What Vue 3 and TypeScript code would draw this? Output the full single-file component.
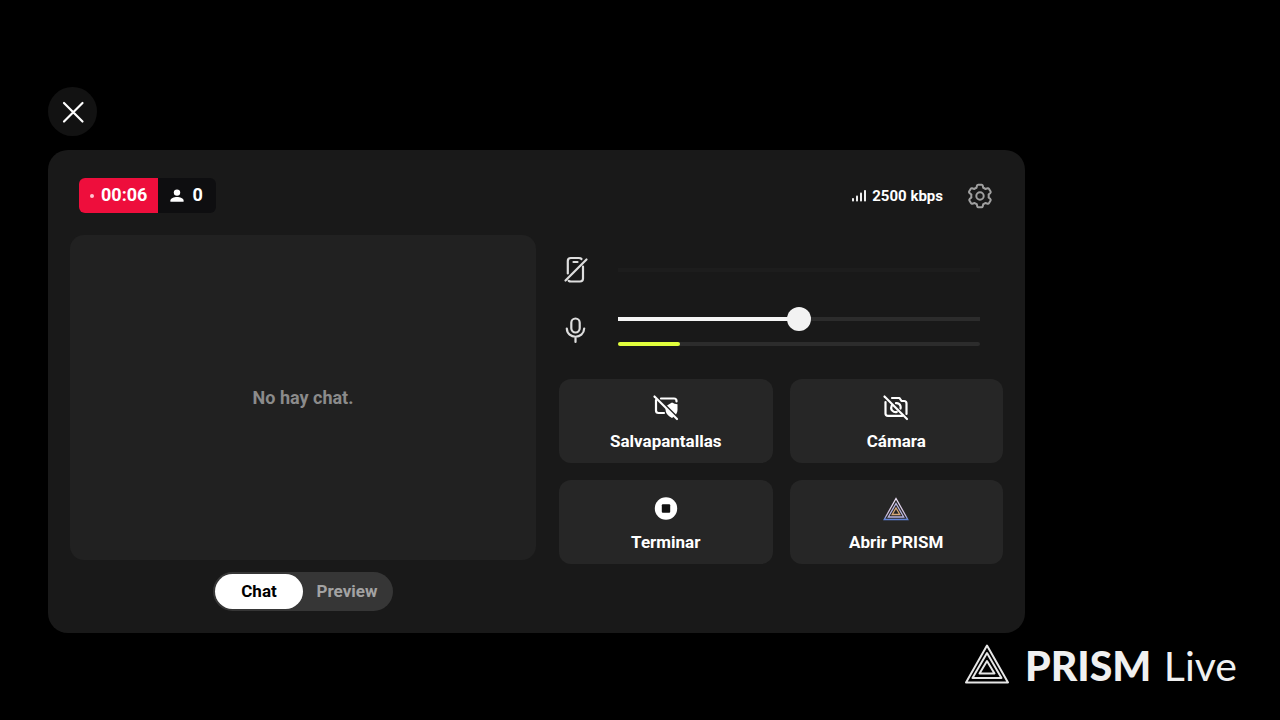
<script setup lang="ts">
import { ref } from 'vue'

type View = 'chat' | 'preview'

const view = ref<View>('chat')
const micVolume = ref(50)
const deviceVolume = ref(0)
const micLevel = ref(17)
const viewers = ref(0)
</script>

<template>
  <main class="screen">
    <button class="close" type="button" aria-label="Cerrar">
      <svg width="24" height="24" viewBox="0 0 24 24" fill="none" stroke="#fff" stroke-width="2.200" stroke-linecap="round">
        <path d="M3 3 21.500 21.500M21.500 3 3 21.500" />
      </svg>
    </button>

    <section class="panel">
      <header class="top">
        <div class="status">
          <span class="time"><i class="dot"></i>00:06</span>
          <span class="viewers">
            <svg width="14" height="14" viewBox="0 0 14 14" fill="#fff">
              <circle cx="7" cy="3.600" r="3.200" />
              <path d="M.4 12.800v-1.400C.4 9.300 4 8 7 8s6.600 1.300 6.600 3.400v1.400z" />
            </svg>
            {{ viewers }}
          </span>
        </div>
        <div class="network">
          <svg width="15" height="13" viewBox="0 0 15 13" fill="#eee">
            <rect x="0" y="9" width="2" height="3.500" rx=".8" />
            <rect x="4" y="6.500" width="2" height="6" rx=".8" />
            <rect x="8" y="3.500" width="2" height="9" rx=".8" />
            <rect x="12" y="1" width="2" height="11.500" rx=".8" />
          </svg>
          2500 kbps
        </div>
        <button class="settings" type="button" aria-label="Ajustes">
          <svg width="26" height="26" viewBox="0 0 26 26" fill="none" stroke="#a0a0a0" stroke-width="2" stroke-linejoin="round">
            <path d="M11.300 1.700h3.400q.8 0 1 .8l.5 2.300q1.200.4 2.200 1.200l2.300-.8q.8-.2 1.200.5l1.700 2.900q.4.700-.2 1.300l-1.800 1.600q.3 1.500 0 3l1.800 1.600q.6.600.2 1.300l-1.700 2.900q-.4.700-1.200.5l-2.300-.8q-1 .8-2.200 1.200l-.5 2.300q-.2.800-1 .8h-3.400q-.8 0-1-.8l-.5-2.300q-1.200-.4-2.200-1.200l-2.300.8q-.8.200-1.200-.5l-1.700-2.900q-.4-.7.200-1.300l1.800-1.600q-.3-1.500 0-3L2.300 9.900q-.6-.6-.2-1.300l1.700-2.900q.4-.7 1.200-.5l2.300.8q1-.8 2.200-1.200l.5-2.300q.2-.8 1.300-.8z" />
            <circle cx="13" cy="13" r="3.700" />
          </svg>
        </button>
      </header>

      <div class="body">
        <div class="left">
          <div class="chat">No hay chat.</div>
          <div class="toggle">
            <button type="button" :class="{ on: view === 'chat' }" :aria-pressed="view === 'chat'" @click="view = 'chat'">Chat</button>
            <button type="button" :class="{ on: view === 'preview' }" :aria-pressed="view === 'preview'" @click="view = 'preview'">Preview</button>
          </div>
        </div>

        <div class="right">
          <div class="audio device">
            <label for="device" aria-label="Audio del dispositivo">
              <svg width="26" height="28" viewBox="0 0 26 28" fill="none" stroke="#dedede" stroke-width="2.200" stroke-linecap="round">
                <path d="M4.800 17.500V5q0-3 3-3h8q2 0 2.700 1M20 10.500V22.500q0 3-3 3H8q-1.500 0-2.300-.7M10.500 6h4M2.500 24.500 23.500 3.500" />
              </svg>
            </label>
            <input id="device" v-model.number="deviceVolume" type="range" disabled />
          </div>
          <div class="audio mic">
            <label for="mic" aria-label="Micrófono">
              <svg width="26" height="28" viewBox="0 0 26 28" fill="none" stroke="#dedede" stroke-width="2.200" stroke-linecap="round">
                <rect x="8.300" y="2.500" width="8.400" height="14" rx="4.200" />
                <path d="M3.800 12.500c.5 11 16.900 11 17.400 0M12.500 21v5" />
              </svg>
            </label>
            <div class="levels">
              <input id="mic" v-model.number="micVolume" type="range" min="0" max="100" :style="{ '--value': micVolume + '%' }" />
              <div class="level"><span :style="{ width: micLevel + '%' }"></span></div>
            </div>
          </div>

          <div class="actions">
            <button type="button">
              <svg width="28" height="28" viewBox="0 0 28 28" fill="none" stroke="#fff" stroke-width="2.200" stroke-linecap="round">
                <path d="M9 5.500h13q2.500 0 2.500 2.500v.5M4 7v10.500q0 2.500 2.500 2.500H12" />
                <path d="M15 12.500 20 9.500q2.500 1.500 5.500 1.800V17q0 2.500-1.500 4.500zM13.500 15l8.500 8.500-2 1.500q-6.500-3-6.500-8.500z" fill="#fff" stroke="none" />
                <path d="M2.500 3.500 25 26" />
              </svg>
              Salvapantallas
            </button>
            <button type="button">
              <svg width="28" height="28" viewBox="0 0 28 28" fill="none" stroke="#fff" stroke-width="2.200" stroke-linecap="round" stroke-linejoin="round">
                <path d="M10 5h7.500l2 3H22Q24.500 8 24.500 10.500v10.500M3.500 9V20.500q0 2.300 2.500 2.300h14.500M14 10.200q3.500-.2 4.500 2.800.4 1.400 0 2.500M9.800 12.500q-1.800 4.500 2 6.200 1.400.6 3 .2" />
                <path d="M2.500 3.500 25 26" />
              </svg>
              Cámara
            </button>
            <button type="button">
              <svg width="28" height="28" viewBox="0 0 28 28">
                <circle cx="14" cy="14.500" r="11.200" fill="#fff" />
                <rect x="9.800" y="10.300" width="8.400" height="8.400" rx="1" fill="#111" />
              </svg>
              Terminar
            </button>
            <button type="button">
              <svg width="28" height="28" viewBox="0 0 28 28" fill="none" stroke-width="1.300">
                <defs>
                  <linearGradient id="prism" x1="0" y1="0" x2="0" y2="1">
                    <stop offset="0" stop-color="#efe4f8" />
                    <stop offset=".8" stop-color="#c9b9d8" />
                    <stop offset="1" stop-color="#5f83d8" />
                  </linearGradient>
                </defs>
                <path d="M14 4.500 25.800 25.500H2.200z" stroke="url(#prism)" />
                <path d="M14 9.500 21.700 23H6.300z" stroke="#b9b4de" />
                <path d="M14 14 17.800 20.500h-7.600z" stroke="#d7a878" />
              </svg>
              Abrir PRISM
            </button>
          </div>
        </div>
      </div>
    </section>

    <footer class="brand">
      <svg width="44" height="40" viewBox="0 0 44 40" fill="none" stroke="#e6e6e6" stroke-width="2" stroke-linejoin="round">
        <path d="M22 1.500 43 38.500H1z" />
        <path d="M22 9 36.500 34h-29z" />
        <path d="M22 17 29.500 29.500h-15z" />
      </svg>
      <span class="name"><b>PRISM</b> Live</span>
    </footer>
  </main>
</template>

<style>
body {
  margin: 0;
  background: #000;
}
</style>

<style scoped>
.screen {
  box-sizing: border-box;
  min-height: 100vh;
  padding: 87px 43px 30px 48px;
  background: #000;
  color: #fff;
  font: 700 17px/20px Roboto, "Liberation Sans", sans-serif;
}

button {
  padding: 0;
  border: 0;
  color: inherit;
  font: inherit;
  cursor: pointer;
}

svg {
  display: block;
  flex: none;
}

.close {
  display: grid;
  place-items: center;
  width: 49px;
  height: 49px;
  border-radius: 50%;
  background: #121212;
}

.panel {
  margin: 14px 212px 0 0;
  padding: 28px 22px 22px;
  border-radius: 20px;
  background: #191919;
}

.top {
  display: flex;
  align-items: center;
  height: 35px;
  padding: 0 10px 0 9px;
}

.status {
  display: flex;
  overflow: hidden;
  height: 35px;
  margin-right: auto;
  border-radius: 6px;
  background: #0e0e10;
  font-size: 18px;
  line-height: 34px;
}

.time,
.viewers {
  display: flex;
}

.time {
  gap: 7px;
  padding: 0 11px;
  background: #ee0e3c;
}

.dot {
  align-self: center;
  width: 4px;
  height: 4px;
  border-radius: 50%;
  background: #ffc4d0;
}

.viewers {
  gap: 8px;
  padding: 0 13px 0 12px;
}

.viewers svg {
  align-self: center;
}

.network {
  display: flex;
  align-items: center;
  gap: 5px;
  margin-right: 24px;
  font-size: 15px;
}

.settings {
  background: none;
}

.body {
  display: grid;
  grid-template-columns: 466fr 444fr;
  gap: 23px;
  margin-top: 22px;
}

.left {
  display: flex;
  flex-direction: column;
  align-items: center;
  gap: 12px;
}

.chat {
  display: grid;
  place-items: center;
  align-self: stretch;
  min-height: 325px;
  border-radius: 14px;
  background: #212121;
  color: #8b8b8b;
  font-size: 18px;
}

.toggle {
  display: flex;
  padding: 2px;
  border-radius: 20px;
  background: #363636;
}

.toggle button {
  width: 88px;
  height: 35px;
  padding-bottom: 2px;
  border-radius: 18px;
  background: none;
  color: #a3a3a3;
}

.toggle .on {
  background: #fff;
  color: #000;
}

.audio {
  display: flex;
  align-items: center;
  gap: 29px;
  padding: 0 23px 0 4px;
}

.device {
  height: 70px;
}

.mic {
  height: 50px;
}

.levels {
  flex: 1;
  align-self: flex-start;
  padding-top: 2px;
}

input {
  display: block;
  flex: 1;
  width: 100%;
  height: 24px;
  margin: 0;
  appearance: none;
  background: linear-gradient(#1d1d1d, #1d1d1d) center / 100% 4px no-repeat;
}

input::-webkit-slider-thumb {
  appearance: none;
  width: 24px;
  height: 24px;
  border-radius: 50%;
  background: #f2f2f2;
}

input:disabled::-webkit-slider-thumb {
  visibility: hidden;
}

.mic input {
  background: linear-gradient(90deg, #f5f5f5 var(--value), #2c2c2c var(--value)) center / 100% 4px no-repeat;
}

.level {
  height: 4px;
  margin-top: 11px;
  border-radius: 2px;
  background: #2c2c2c;
}

.level span {
  display: block;
  height: 4px;
  border-radius: 2px;
  background: #e1ff3c;
}

.actions {
  display: grid;
  grid-template-columns: 1fr 1fr;
  gap: 17px;
  margin-top: 24px;
}

.actions button {
  display: flex;
  flex-direction: column;
  align-items: center;
  gap: 10px;
  height: 84px;
  padding-top: 14px;
  border-radius: 12px;
  background: #262626;
}

.brand {
  display: flex;
  align-items: center;
  justify-content: flex-end;
  gap: 16px;
  height: 40px;
  margin-top: 11px;
  color: #f0f0f0;
}

.name {
  padding-top: 4px;
  font: 400 41px/40px Lato, sans-serif;
}

.name b {
  margin-right: 2px;
  font-weight: 900;
}
</style>
